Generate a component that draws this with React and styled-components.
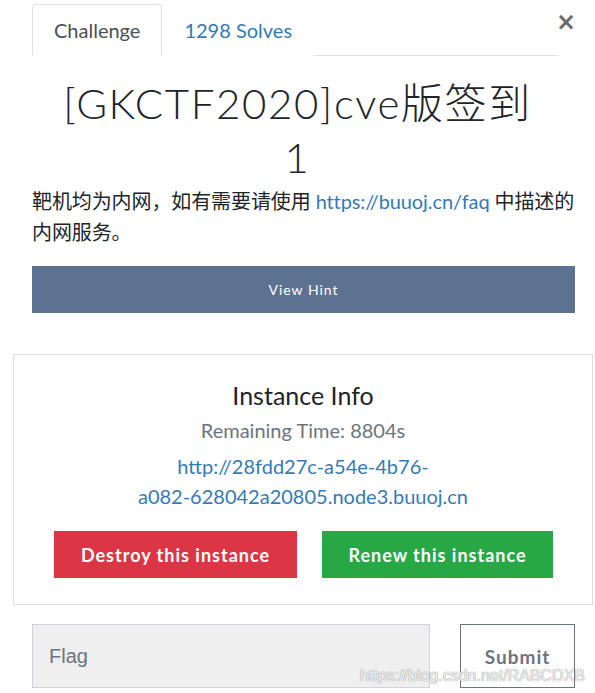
import React from 'react'
import styled, { createGlobalStyle } from 'styled-components'

const Global = createGlobalStyle`
    body {
        margin: 0;
        background: #fff;
        font-family: Lato, "Noto Sans CJK SC", sans-serif;
        color: #212529;
    }
`

const App = () => {
    return (
        <Page>
            <Global />
            <TabBar>
                <Tab active>Challenge</Tab>
                <Tab>1298 Solves</Tab>
                <Close>×</Close>
            </TabBar>
            <Titulo>[GKCTF2020]cve版签到1</Titulo>
            <Texto>
                靶机均为内网，如有需要请使用 <Enlace>https://buuoj.cn/faq</Enlace> 中描述的内网服务。
            </Texto>
            <Hint>View Hint</Hint>
            <Card>
                <CardTitle>Instance Info</CardTitle>
                <Remaining>Remaining Time: 8804s</Remaining>
                <Url>http://28fdd27c-a54e-4b76-<br />a082-628042a20805.node3.buuoj.cn</Url>
                <Botones>
                    <Accion color="#dc3545" width="243px">Destroy this instance</Accion>
                    <Accion color="#28a745" width="231px">Renew this instance</Accion>
                </Botones>
            </Card>
            <FlagRow>
                <FlagInput placeholder="Flag" />
                <Submit>Submit</Submit>
            </FlagRow>
            <Marca>https://blog.csdn.net/RABCDXB</Marca>
        </Page>
    )
}

export default App

const Page = styled.div`
    position: relative;
    width: 595px;
    height: 693px;
    overflow: hidden;
    padding-top: 4px;
    box-sizing: border-box;
`

const TabBar = styled.div`
    position: relative;
    display: flex;
    margin: 0 37px 0 32px;
    border-bottom: 1px solid #dee2e6;
    height: 51px;
`

const Tab = styled.div`
    display: flex;
    align-items: center;
    padding: 0 21px;
    font-size: 20px;
    margin-bottom: -1px;
    color: ${p => (p.active ? '#495057' : '#337ab7')};
    background: #fff;
    border: 1px solid ${p => (p.active ? '#dee2e6' : 'transparent')};
    border-bottom-color: ${p => (p.active ? '#fff' : 'transparent')};
    border-radius: 4px 4px 0 0;
`

const Close = styled.div`
    position: absolute;
    right: -18px;
    top: 3px;
    font-family: "DejaVu Sans", sans-serif;
    font-size: 24px;
    font-weight: bold;
    color: #6b6b6b;
    line-height: 30px;
`

const Titulo = styled.h1`
    margin: 20px 55px 0;
    text-align: center;
    font-family: Lato, "Noto Sans CJK SC", sans-serif;
    font-weight: 300;
    font-size: 42px;
    line-height: 54px;
    letter-spacing: 1.6px;
    color: #212529;
`

const Texto = styled.p`
    margin: 2px 12px 0 32px;
    font-size: 20px;
    line-height: 31px;
    letter-spacing: -0.1px;
    color: #212529;
`

const Enlace = styled.a`
    color: #337ab7;
    text-decoration: none;
`

const Hint = styled.div`
    margin: 18px 20px 0 32px;
    height: 47px;
    background: #5c7290;
    color: #fff;
    display: flex;
    align-items: center;
    justify-content: center;
    font-size: 14px;
    letter-spacing: 1px;
`

const Card = styled.div`
    margin: 41px 2px 0 13px;
    height: 251px;
    box-sizing: border-box;
    border: 1px solid #dcdcdc;
    display: flex;
    flex-direction: column;
    align-items: center;
    padding-top: 25px;
`

const CardTitle = styled.div`
    font-size: 25px;
    line-height: 30px;
    color: #212529;
`

const Remaining = styled.div`
    margin-top: 5px;
    font-size: 20px;
    line-height: 30px;
    color: #6c757d;
`

const Url = styled.a`
    margin-top: 6px;
    text-align: center;
    font-size: 20px;
    line-height: 30px;
    color: #337ab7;
`

const Botones = styled.div`
    display: flex;
    gap: 25px;
    margin-top: 20px;
    margin-left: 18px;
    align-self: flex-start;
    padding-left: 22px;
`

const Accion = styled.button`
    width: ${p => p.width};
    height: 47px;
    border: none;
    background: ${p => p.color};
    color: #fff;
    font-family: Lato, sans-serif;
    font-weight: bold;
    font-size: 18px;
    letter-spacing: 1px;
`

const FlagRow = styled.div`
    display: flex;
    gap: 30px;
    margin: 19px 20px 0 32px;
`

const FlagInput = styled.input`
    width: 398px;
    height: 64px;
    box-sizing: border-box;
    background: #efefef;
    border: 1px solid #ced4da;
    padding: 0 16px;
    font-family: "Liberation Sans", sans-serif;
    font-size: 20px;
    color: #495057;
    &::placeholder {
        color: #6c757d;
    }
`

const Submit = styled.button`
    width: 115px;
    height: 64px;
    background: #fff;
    border: 1px solid #6c757d;
    color: #6c757d;
    font-family: Lato, sans-serif;
    font-weight: bold;
    font-size: 19px;
    letter-spacing: 1px;
`

const Marca = styled.div`
    position: absolute;
    right: 10px;
    bottom: 8px;
    font-family: "Liberation Sans", sans-serif;
    font-size: 16px;
    color: rgba(255, 255, 255, 0.85);
    text-shadow: 0 0 1px #999, 0 0 1px #999;
`
